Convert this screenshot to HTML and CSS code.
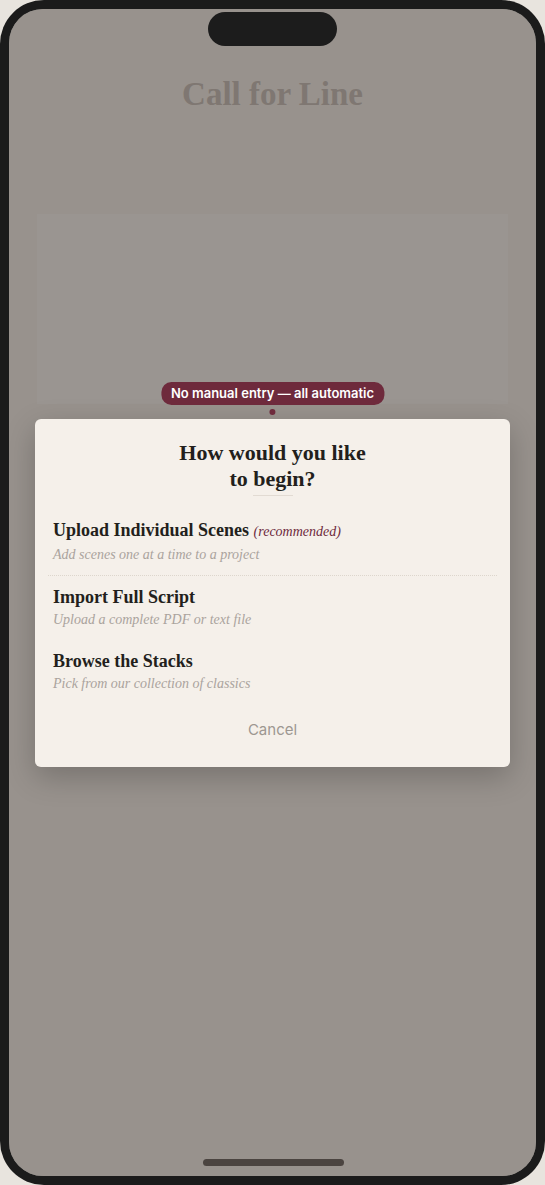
FILE: index.html
```html
<!DOCTYPE html>
<html lang="en">
<head>
  <meta charset="UTF-8" />
  <title>Call for Line</title>
  <link rel="stylesheet" href="styles.css">
</head>
<body>

  <div class="phone">
    <div class="island"></div>
    <div class="screen">
      <header class="app-header">
        <h1>Call for Line</h1>
      </header>
      <div class="placeholder-card"></div>

      <div class="overlay">
        <div class="sheet">
          <div class="hint">No manual entry — all automatic</div>
          <h2>How would you like<br>to begin?</h2>
          <div class="rule"></div>
          <ul class="options">
            <li class="option">
              <div class="option-title">Upload Individual Scenes <em>(recommended)</em></div>
              <div class="option-desc">Add scenes one at a time to a project</div>
            </li>
            <li class="option">
              <div class="option-title">Import Full Script</div>
              <div class="option-desc">Upload a complete PDF or text file</div>
            </li>
            <li class="option">
              <div class="option-title">Browse the Stacks</div>
              <div class="option-desc">Pick from our collection of classics</div>
            </li>
          </ul>
          <button class="cancel">Cancel</button>
        </div>
      </div>

      <div class="home-bar"></div>
    </div>
  </div>

</body>
</html>
```

FILE: styles.css
```css
* {
  box-sizing: border-box;
}
body {
  margin: 0;
  background: #e8e4de;
  font-family: 'Liberation Serif', serif;
}
.phone {
  position: relative;
  width: 545px;
  height: 1185px;
  padding: 9px;
  background: #1b1b1b;
  border-radius: 44px;
}
.island {
  position: absolute;
  top: 12px;
  left: 208px;
  width: 129px;
  height: 34px;
  border-radius: 17px;
  background: #1c1c1c;
  z-index: 5;
}
.screen {
  position: relative;
  height: 100%;
  background: #f4efe9;
  border-radius: 34px;
  overflow: hidden;
}
.app-header {
  padding-top: 65px;
  text-align: center;
}
.app-header h1 {
  margin: 0;
  font-size: 33px;
  line-height: 40px;
  font-weight: bold;
  color: #c6beb8;
}
.placeholder-card {
  margin: 100px 28px 0;
  height: 190px;
  background: #f8f5f1;
}
.overlay {
  position: absolute;
  inset: 0;
  display: flex;
  align-items: center;
  justify-content: center;
  padding: 0 26px;
  background: rgba(40, 34, 28, 0.45);
}
.sheet {
  position: relative;
  width: 100%;
  padding: 21px 0 17px;
  background: #f5f0ea;
  border-radius: 6px;
  box-shadow: 0 10px 30px rgba(0, 0, 0, 0.22);
  text-align: center;
}
.hint {
  position: absolute;
  bottom: calc(100% + 14px);
  left: 50%;
  transform: translateX(-50%);
  padding: 3px 10px;
  border-radius: 10px;
  background: #6e2a3c;
  color: #fff;
  font-family: Inter, sans-serif;
  font-size: 13px;
  line-height: 17px;
  font-weight: 600;
  white-space: nowrap;
}
.hint::after {
  content: "";
  position: absolute;
  top: calc(100% + 4px);
  left: 50%;
  width: 6px;
  height: 6px;
  margin-left: -3px;
  border-radius: 50%;
  background: #6e2a3c;
}
.sheet h2 {
  margin: 0;
  font-size: 22px;
  line-height: 26px;
  font-weight: bold;
  color: #231f1c;
}
.rule {
  width: 40px;
  height: 1px;
  margin: 3px auto 0;
  background: #e2dbd3;
}
.options {
  list-style: none;
  margin: 13px 13px 0;
  padding: 0;
  text-align: left;
}
.option {
  padding: 10px 5px;
}
.option:first-child {
  border-bottom: 1px dotted #ddd6cd;
}
.option-title {
  font-size: 18px;
  line-height: 22px;
  font-weight: bold;
  color: #231f1c;
}
.option-title em {
  font-size: 14px;
  font-weight: normal;
  color: #6e2a3c;
}
.option-desc {
  margin-top: 2px;
  font-size: 14px;
  line-height: 20px;
  font-style: italic;
  color: #aaa39d;
}
.cancel {
  margin-top: 6px;
  padding: 10px 20px;
  border: none;
  background: none;
  font-family: Inter, sans-serif;
  font-size: 15px;
  line-height: 20px;
  color: #9d9791;
  cursor: pointer;
}
.home-bar {
  position: absolute;
  bottom: 10px;
  left: 50%;
  width: 141px;
  height: 7px;
  margin-left: -70px;
  border-radius: 4px;
  background: #4b4440;
}
```
